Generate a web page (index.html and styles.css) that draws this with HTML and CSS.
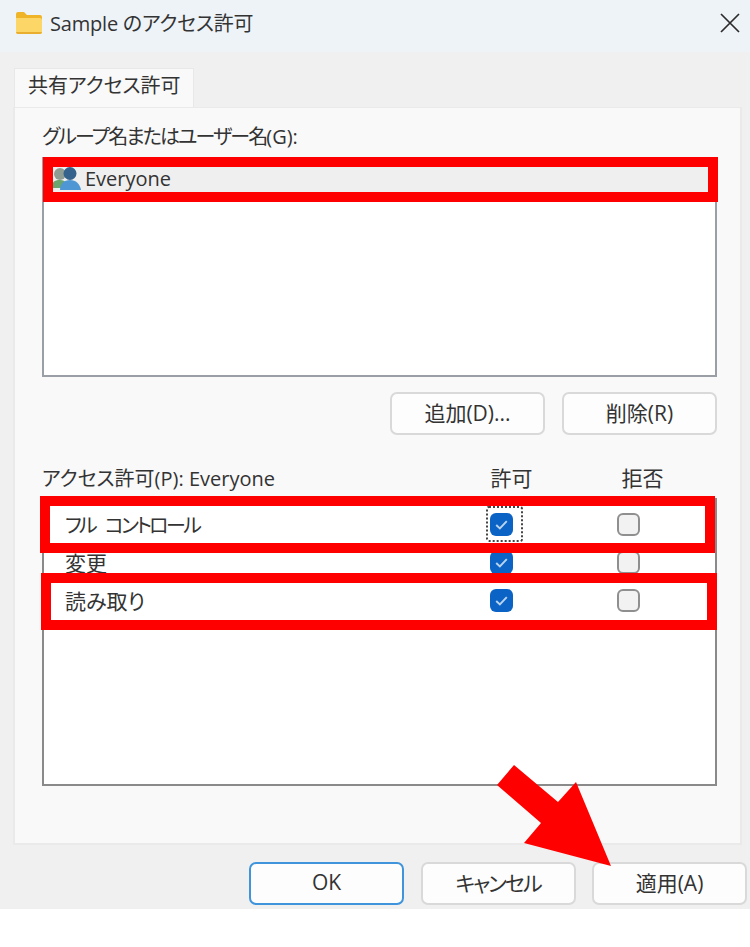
FILE: index.html
```html
<!DOCTYPE html>
<html lang="ja">
<head>
  <meta charset="UTF-8">
  <meta name="viewport" content="width=device-width, initial-scale=1.0">
  <title>Sample のアクセス許可</title>
  <link rel="stylesheet" href="styles.css">
</head>
<body>
  <div class="dialog">
    <!-- Title bar -->
    <div class="titlebar">
      <svg class="folder-icon" viewBox="0 0 26 22" width="26" height="22">
        <path d="M0 2a2 2 0 0 1 2-2h6l3 3h13a2 2 0 0 1 2 2v3H0z" fill="#f0b429"/>
        <path d="M0 6h24a2 2 0 0 1 2 2v12a2 2 0 0 1-2 2H2a2 2 0 0 1-2-2z" fill="#fcd667"/>
        <path d="M0 20h26a2 2 0 0 1-2 2H2a2 2 0 0 1-2-2z" fill="#e9ad2f"/>
      </svg>
      <span class="title-text">Sample のアクセス許可</span>
      <svg class="close-icon" viewBox="0 0 20 20" width="20" height="20">
        <path d="M1 1L19 19M19 1L1 19" stroke="#2b2b2b" stroke-width="1.7" fill="none"/>
      </svg>
    </div>

    <!-- Tab -->
    <div class="tab-strip">
      <div class="tab">共有アクセス許可</div>
    </div>

    <div class="panel">
      <div class="field-label">グループ名またはユーザー名<span class="latin">(G):</span></div>
      <div class="user-list">
        <div class="user-row">
          <svg class="users-icon" viewBox="0 0 29 23" width="29" height="23">
            <circle cx="8" cy="7" r="6" fill="#8f9c93"/>
            <path d="M0 21c0-6 2-8 8-8 3 0 5 1 6 3v5z" fill="#6aa56f"/>
            <circle cx="18" cy="6.5" r="6.5" fill="#34628c"/>
            <path d="M8 23c0-6 4-10 10-10s10 4 11 10z" fill="#4f97d4"/>
          </svg>
          <span>Everyone</span>
        </div>
      </div>

      <div class="list-buttons">
        <button class="btn">追加(D)...</button>
        <button class="btn">削除(R)</button>
      </div>

      <div class="perm-header">
        <span>アクセス許可(P): Everyone</span>
        <span class="perm-col">許可</span>
        <span class="perm-col">拒否</span>
      </div>

      <div class="perm-list">
        <div class="perm-row">
          <span class="tight">フル コントロール</span>
          <span class="check-cell"><span class="focus-box"><span class="check checked"><svg viewBox="0 0 24 24" width="23" height="23"><path d="M6.5 12.5l3.8 3.6 7.2-7.6" stroke="#b9d4ef" stroke-width="2" fill="none"/></svg></span></span></span>
          <span class="check-cell"><span class="check"></span></span>
        </div>
        <div class="perm-row">
          <span class="perm-name">変更</span>
          <span class="check-cell"><span class="check checked"><svg viewBox="0 0 24 24" width="23" height="23"><path d="M6.5 12.5l3.8 3.6 7.2-7.6" stroke="#b9d4ef" stroke-width="2" fill="none"/></svg></span></span>
          <span class="check-cell"><span class="check"></span></span>
        </div>
        <div class="perm-row">
          <span class="perm-name">読み取り</span>
          <span class="check-cell"><span class="check checked"><svg viewBox="0 0 24 24" width="23" height="23"><path d="M6.5 12.5l3.8 3.6 7.2-7.6" stroke="#b9d4ef" stroke-width="2" fill="none"/></svg></span></span>
          <span class="check-cell"><span class="check"></span></span>
        </div>
      </div>
    </div>

    <!-- Footer buttons -->
    <div class="footer">
      <button class="btn btn-default">OK</button>
      <button class="btn btn-tight">キャンセル</button>
      <button class="btn">適用(A)</button>
    </div>

    <!-- Red annotations drawn over the dialog -->
    <div class="mark mark-user"></div>
    <div class="mark mark-full"></div>
    <div class="mark mark-read"></div>
    <svg class="arrow" viewBox="0 0 750 947" width="750" height="947">
      <polygon points="514,765 497,785 541,823 524,843 611,866 576,782 558,802" fill="#ff0000"/>
    </svg>
  </div>
</body>
</html>
```

FILE: styles.css
```css
* {
  box-sizing: border-box;
}

body {
  margin: 0;
  background-color: #fff;
  color: #333;
  font-family: "Open Sans", "Noto Sans CJK JP", sans-serif;
  font-size: 20px;
  font-feature-settings: "palt";
}

.dialog {
  position: relative;
  width: 750px;
  height: 909px;
  background-color: #f0f0f0;
}

/* Title bar */
.titlebar {
  display: flex;
  align-items: center;
  height: 52px;
  padding: 0 10px 6px 16px;
  background-color: #eef3f8;
}

.folder-icon {
  margin-right: 8px;
}

.title-text {
  flex: 1;
  padding-bottom: 2px;
  letter-spacing: -0.2px;
}

/* Tab */
.tab-strip {
  display: flex;
  height: 55px;
  padding: 16px 0 0 14px;
}

.tab {
  width: 180px;
  height: 39px;
  padding-left: 13px;
  line-height: 33px;
  background-color: #f9f9f9;
  border: 1px solid #e8e8e8;
  border-bottom: none;
}

/* Panel */
.panel {
  width: 729px;
  height: 738px;
  margin-left: 13px;
  padding: 16px 23px 0 27px;
  background-color: #f9f9f9;
  border: 2px solid #eaeaea;
  border-top-width: 1px;
}

.field-label {
  height: 33px;
  line-height: 26px;
  letter-spacing: -1.9px;
  white-space: nowrap;
}

.latin {
  letter-spacing: 0;
}

.user-list {
  height: 220px;
  padding-top: 9px;
  background-color: #fff;
  border: 2px solid #9a9fa5;
  border-width: 1px 2px 2px 2px;
}

.user-row {
  display: flex;
  align-items: center;
  height: 26px;
  padding: 0 0 3px 8px;
  gap: 4px;
  background-color: #efefef;
}

.list-buttons {
  display: flex;
  justify-content: flex-end;
  gap: 17px;
  margin-top: 15px;
}

.btn {
  width: 155px;
  height: 43px;
  padding: 0 0 3px;
  background-color: #fdfdfd;
  color: #333;
  border: 2px solid #d9d9d9;
  border-radius: 7px;
  font-family: inherit;
  font-size: 21px;
  font-feature-settings: inherit;
}

.btn-default {
  border-color: #3f94dc;
}

.btn-tight {
  letter-spacing: -2px;
}

/* Permissions */
.perm-header {
  display: grid;
  grid-template-columns: 1fr 131px 131px;
  align-items: center;
  height: 63px;
  padding: 21px 9px 0 0;
  white-space: nowrap;
}

.perm-col {
  font-size: 21px;
  text-align: center;
}

.perm-list {
  height: 288px;
  padding-top: 6px;
  background-color: #fff;
  border: 2px solid #8a8a8a;
  border-width: 1px 2px 2px 2px;
}

.perm-row {
  display: grid;
  grid-template-columns: 1fr 127px 127px;
  align-items: center;
  height: 38px;
  padding: 0 23.5px 0 21px;
}

.tight {
  letter-spacing: -2.6px;
  word-spacing: 7px;
}

.perm-name {
  font-size: 21px;
}

.check-cell {
  display: flex;
  justify-content: center;
}

.check {
  display: block;
  width: 23px;
  height: 23px;
  background-color: #f2f2f2;
  border: 2px solid #8f8f8f;
  border-radius: 6px;
}

.check svg {
  display: block;
}

.check.checked {
  background-color: #0b63c5;
  border: none;
}

.focus-box {
  display: flex;
  align-items: center;
  height: 36px;
  padding: 0 10px 0 4px;
  margin-left: 6px;
  outline: 2px dotted #444;
  outline-offset: -2px;
  border-radius: 3px;
}

/* Footer */
.footer {
  display: flex;
  justify-content: flex-end;
  gap: 16.5px;
  padding: 17px 3px 0 0;
}

/* Annotations */
.mark {
  position: absolute;
  border: 10px solid #ff0000;
}

.mark-user {
  left: 43px;
  top: 157px;
  width: 675px;
  height: 45px;
}

.mark-full {
  left: 40px;
  top: 496px;
  width: 675px;
  height: 57px;
}

.mark-read {
  left: 41px;
  top: 573px;
  width: 676px;
  height: 57px;
}

.arrow {
  position: absolute;
  left: 0;
  top: 0;
  pointer-events: none;
}
```
